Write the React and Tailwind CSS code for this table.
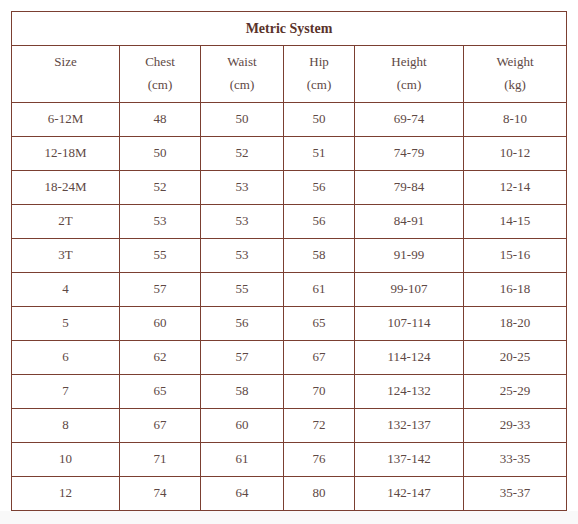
import React from "react";

const rows = [
  ["6-12M", "48", "50", "50", "69-74", "8-10"],
  ["12-18M", "50", "52", "51", "74-79", "10-12"],
  ["18-24M", "52", "53", "56", "79-84", "12-14"],
  ["2T", "53", "53", "56", "84-91", "14-15"],
  ["3T", "55", "53", "58", "91-99", "15-16"],
  ["4", "57", "55", "61", "99-107", "16-18"],
  ["5", "60", "56", "65", "107-114", "18-20"],
  ["6", "62", "57", "67", "114-124", "20-25"],
  ["7", "65", "58", "70", "124-132", "25-29"],
  ["8", "67", "60", "72", "132-137", "29-33"],
  ["10", "71", "61", "76", "137-142", "33-35"],
  ["12", "74", "64", "80", "142-147", "35-37"],
];

const headers = [
  ["Size", ""],
  ["Chest", "(cm)"],
  ["Waist", "(cm)"],
  ["Hip", "(cm)"],
  ["Height", "(cm)"],
  ["Weight", "(kg)"],
];

export default function App() {
  return (
    <div className="min-h-screen bg-[#f9f9f9] font-['Liberation_Serif','DejaVu_Serif',serif] text-[13px] text-[#5e4844]">
      <div className="bg-white h-[511px] pt-[11px] pl-[11px]">
        <div className="w-[556px] border-l border-t border-[#7b3f31]">
          <div className="h-[34px] pb-[1px] border-r border-b border-[#7b3f31] flex items-center justify-center font-bold text-[#5a332b] text-[14px]">
            Metric System
          </div>
          <div className="grid grid-cols-[108px_81px_83px_71px_109px_103px]">
            {headers.map(([a, b], i) => (
              <div
                key={i}
                className="h-[57px] pb-[2px] border-r border-b border-[#7b3f31] flex flex-col items-center justify-center leading-[23px]"
              >
                <span>{a}</span>
                <span>{b || "\u00a0"}</span>
              </div>
            ))}
            {rows.map((r, ri) =>
              r.map((c, ci) => (
                <div
                  key={ri + "-" + ci}
                  className="h-[34px] pb-[2px] border-r border-b border-[#7b3f31] flex items-center justify-center"
                >
                  {c}
                </div>
              ))
            )}
          </div>
        </div>
      </div>
    </div>
  );
}
